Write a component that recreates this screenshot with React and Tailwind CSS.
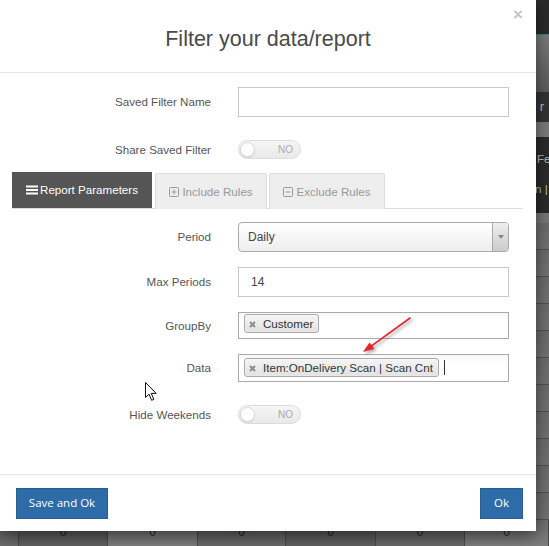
import React from "react";

const LABEL = "w-[211px] shrink-0 text-right text-[11.6px] text-[#555] leading-none";

function Row({ label, className, children }) {
  return (
    <div className={"flex items-center " + className}>
      <div className={LABEL}>{label}</div>
      <div className="ml-[27px] w-[271px] shrink-0">{children}</div>
    </div>
  );
}

function Toggle() {
  return (
    <div className="flex h-[19px] w-[63px] items-center rounded-full border border-[#dcdcdc] bg-linear-to-b from-[#f6f6f6] to-[#e9e9e9]">
      <div className="ml-[1px] h-[15px] w-[15px] rounded-full border border-[#d8d8d8] bg-white shadow-[0_1px_1px_rgba(0,0,0,0.08)]" />
      <span className="ml-auto mr-[7px] text-[10px] leading-none text-[#aaa]">NO</span>
    </div>
  );
}

function Tag({ children }) {
  return (
    <span className="inline-flex h-[19px] items-center rounded-[3px] border border-[#aaa] bg-linear-to-b from-[#f4f4f4] to-[#e2e2e2] pl-[4px] pr-[5px] text-[11.6px] leading-none text-[#333] shadow-[0_0_2px_rgba(255,255,255,0.8)_inset]">
      <svg width="7" height="7" viewBox="0 0 7 7" className="mr-[7px] mt-[2px]">
        <path d="M1 1 L6 6 M6 1 L1 6" stroke="#8a8a8a" strokeWidth="1.8" />
      </svg>
      {children}
    </span>
  );
}

function MenuIcon() {
  return (
    <svg width="12" height="10" viewBox="0 0 12 10" className="mr-[2px]">
      <rect x="0" y="0.5" width="12" height="2" fill="#fff" />
      <rect x="0" y="4" width="12" height="2" fill="#fff" />
      <rect x="0" y="7.5" width="12" height="2" fill="#fff" />
    </svg>
  );
}

function BoxIcon({ plus }) {
  return (
    <svg width="10" height="10" viewBox="0 0 10 10" className="mr-[3px]">
      <rect x="0.5" y="0.5" width="9" height="9" rx="1" fill="none" stroke="#999" strokeWidth="1" />
      <path d="M2.5 5 H7.5" stroke="#999" strokeWidth="1" />
      {plus && <path d="M5 2.5 V7.5" stroke="#999" strokeWidth="1" />}
    </svg>
  );
}

function Background() {
  const cells = [
    { w: "w-[19px]", c: "bg-linear-to-b from-[#5e5e5e] to-[#6c6c6c]", t: "" },
    { w: "w-[89px]", c: "bg-linear-to-b from-[#545454] to-[#626262]", t: "0" },
    { w: "w-[90px]", c: "bg-linear-to-b from-[#6e6e6e] to-[#7e7e7e]", t: "0" },
    { w: "w-[88px]", c: "bg-linear-to-b from-[#5c5c5c] to-[#6a6a6a]", t: "0" },
    { w: "w-[90px]", c: "bg-linear-to-b from-[#545454] to-[#626262]", t: "0" },
    { w: "w-[89px]", c: "bg-linear-to-b from-[#5c5c5c] to-[#6a6a6a]", t: "0" },
    { w: "w-[84px]", c: "bg-linear-to-b from-[#6e6e6e] to-[#7e7e7e]", t: "0" },
  ];
  const rows = Array.from({ length: 11 });
  return (
    <div className="flex h-[546px] w-[549px] flex-col overflow-hidden bg-[#5f5f5f] font-['Liberation_Sans',Arial,sans-serif]">
      <div className="h-[35px] shrink-0 border-b border-[#3b7f95] bg-[#2a2a2a]" />
      <div className="h-[57px] shrink-0 bg-linear-to-b from-[#7a7a7a] to-[#5a5a5a]" />
      <div className="flex h-[30px] shrink-0 items-center justify-end bg-[#333] pr-[5px] text-[13px] text-[#bbb]">
        r
      </div>
      <div className="h-[15px] shrink-0 bg-[#7a7a7a]" />
      <div className="flex h-[76px] shrink-0 flex-col bg-[#2a2a2a] pt-[7px] text-[11.6px] whitespace-nowrap text-[#bbb]">
        <div className="h-[30px] pl-[537px] leading-[30px]">Fe</div>
        <div className="h-[30px] pl-[535px] leading-[30px]">n |</div>
      </div>
      <div className="h-[10px] shrink-0 bg-[#767676]" />
      {rows.map((_, i) => (
        <div
          key={i}
          className="h-[27px] shrink-0 border-b border-[#505050] bg-linear-to-b from-[#6a6a6a] to-[#727272]"
        />
      ))}
      <div className="flex h-[26px] shrink-0">
        {cells.map((c, i) => (
          <div
            key={i}
            className={
              c.w +
              " " +
              c.c +
              " shrink-0 border-r border-[#4a4a4a] pt-[6px] text-center text-[12px] leading-none text-[#1e1e1e]"
            }
          >
            {c.t}
          </div>
        ))}
      </div>
    </div>
  );
}

export default function App() {
  return (
    <div className="relative h-[546px] w-[549px] overflow-hidden font-['Liberation_Sans',Arial,sans-serif]">
      <Background />

      {/* Modal */}
      <div className="absolute left-0 top-0 flex h-[531px] w-[536px] flex-col bg-white shadow-[0_5px_15px_rgba(0,0,0,0.5)]">
        {/* Header */}
        <div className="relative flex h-[73px] shrink-0 items-center justify-center border-b border-[#e5e5e5] pt-[8px]">
          <h4 className="text-[21.5px] leading-none text-[#4a4a4a]">Filter your data/report</h4>
          <button className="absolute right-[13px] top-[6px] text-[17px] font-bold leading-none text-[#c4c4c4]">
            ×
          </button>
        </div>

        {/* Body */}
        <div className="relative flex flex-1 flex-col pt-[14px]">
          <Row label="Saved Filter Name" className="h-[30px]">
            <input className="block h-[30px] w-full border border-[#c8c8c8] bg-white outline-none" />
          </Row>

          <Row label="Share Saved Filter" className="mt-[23px] h-[19px]">
            <Toggle />
          </Row>

          {/* Tabs */}
          <div className="ml-[12px] mt-[14px] flex h-[36px] w-[511px] items-end border-b border-[#ddd]">
            <div className="flex h-[36px] w-[140px] items-center justify-center bg-[#555] text-[11.6px] text-white">
              <MenuIcon />
              Report Parameters
            </div>
            <div className="mb-[-1px] ml-[3px] flex h-[36px] w-[112px] items-center justify-center rounded-t-[2px] border border-b-0 border-[#ddd] bg-[#eee] text-[11.6px] text-[#999]">
              <BoxIcon plus />
              Include Rules
            </div>
            <div className="mb-[-1px] ml-[2px] flex h-[36px] w-[116px] items-center justify-center rounded-t-[2px] border border-b-0 border-[#ddd] bg-[#eee] text-[11.6px] text-[#999]">
              <BoxIcon />
              Exclude Rules
            </div>
          </div>

          <Row label="Period" className="mt-[13px] h-[30px]">
            <div className="flex h-[30px] w-full overflow-hidden rounded-[4px] border border-[#aaa] bg-linear-to-b from-white to-[#eeeeee]">
              <span className="flex-1 pl-[9px] text-[12px] leading-[28px] text-[#444]">Daily</span>
              <div className="flex w-[16px] items-center justify-center border-l border-[#aaa] bg-linear-to-b from-[#eeeeee] to-[#cccccc]">
                <svg width="6" height="4" viewBox="0 0 6 4">
                  <path d="M0 0 H6 L3 4 Z" fill="#888" />
                </svg>
              </div>
            </div>
          </Row>

          <Row label="Max Periods" className="mt-[15px] h-[30px]">
            <div className="flex h-[30px] w-full items-center border border-[#c8c8c8] pl-[12px] text-[12px] text-[#444]">
              14
            </div>
          </Row>

          <Row label="GroupBy" className="mt-[15px] h-[27px]">
            <div className="flex h-[27px] w-full items-start border border-[#aaa] bg-linear-to-b from-[#f8f8f8] to-white to-[30%] pl-[5px] pt-[1px]">
              <Tag>Customer</Tag>
            </div>
          </Row>

          <Row label="Data" className="mt-[15px] h-[28px]">
            <div className="flex h-[28px] w-full items-start border border-[#aaa] bg-linear-to-b from-[#f8f8f8] to-white to-[30%] pl-[5px] pt-[3px]">
              <Tag>Item:OnDelivery Scan | Scan Cnt</Tag>
              <span className="ml-[5px] mt-[2px] h-[15px] w-px bg-[#333]" />
            </div>
          </Row>

          <Row label="Hide Weekends" className="mt-[23px] h-[19px]">
            <Toggle />
          </Row>

          {/* Red annotation arrow */}
          <svg
            className="pointer-events-none absolute left-[355px] top-[239px] drop-shadow-[2px_2px_1.5px_rgba(0,0,0,0.35)]"
            width="60"
            height="48"
            viewBox="0 0 60 48"
          >
            <path d="M55 6 L16.9 33.6" stroke="#e8202a" strokeWidth="1.6" strokeLinecap="round" />
            <path d="M8 40 L19.2 36.8 L14.6 30.4 Z" fill="#e8202a" />
          </svg>

          {/* Mouse pointer */}
          <svg
            className="pointer-events-none absolute left-[145px] top-[309px]"
            width="13"
            height="20"
            viewBox="0 0 13 20"
          >
            <path
              d="M0.5 0.5 L0.5 15.5 L4 12.2 L6.6 18.3 L8.8 17.4 L6.3 11.4 L11.2 11.4 Z"
              fill="#fff"
              stroke="#111"
              strokeWidth="1"
              strokeLinejoin="round"
            />
          </svg>
        </div>

        {/* Footer */}
        <div className="flex h-[57px] shrink-0 items-center justify-between border-t border-[#e5e5e5] pl-[16px] pr-[13px]">
          <button className="h-[31px] w-[92px] border border-[#285e8e] bg-[#2d6ca9] font-['Open_Sans',sans-serif] text-[11.5px] text-white">
            Save and Ok
          </button>
          <button className="h-[31px] w-[43px] border border-[#285e8e] bg-[#2d6ca9] font-['Open_Sans',sans-serif] text-[11.5px] text-white">
            Ok
          </button>
        </div>
      </div>
    </div>
  );
}
